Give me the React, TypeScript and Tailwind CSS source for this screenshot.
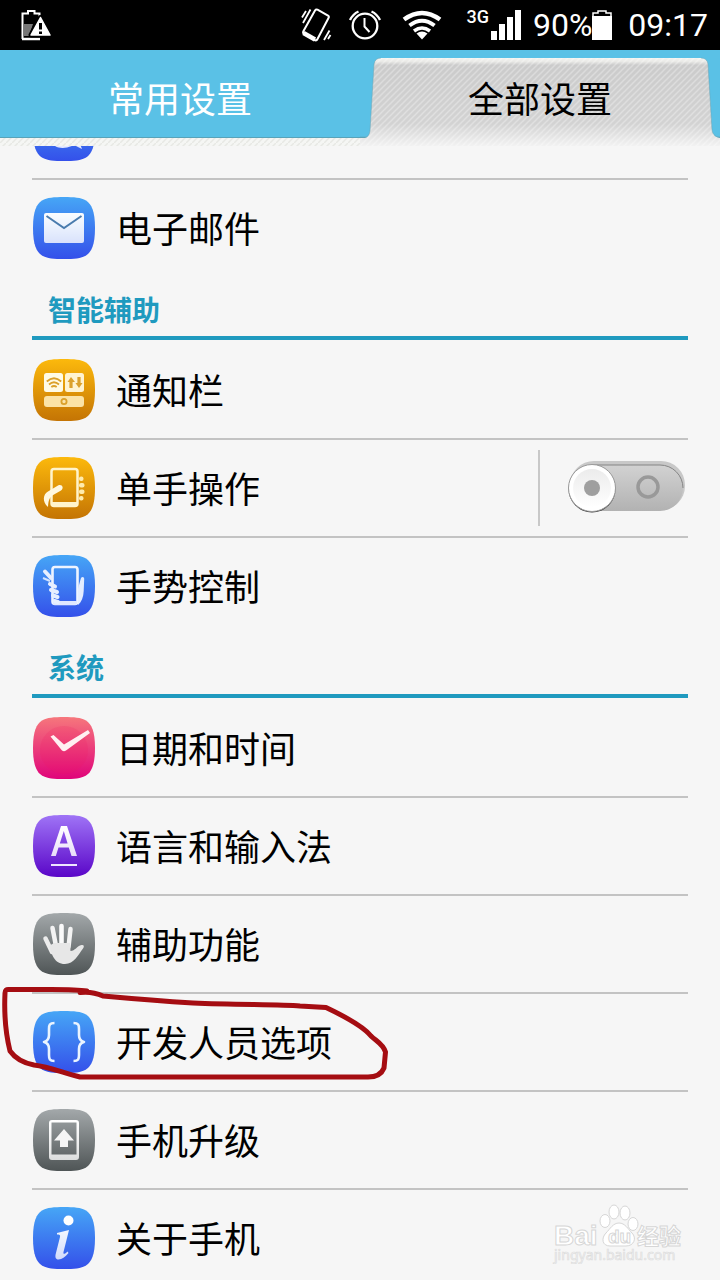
import React, { useState } from "react";

type Tone = "blue" | "amber" | "pink" | "purple" | "gray";

const tones: Record<Tone, [string, string]> = {
  blue: ["#46a6f6", "#3450ea"],
  amber: ["#fcb90c", "#c47404"],
  pink: ["#f6777c", "#e0047a"],
  purple: ["#9f74f6", "#5a06c8"],
  gray: ["#a3a8aa", "#4f5556"],
};

function Tile({ tone, id, children }: { tone: Tone; id: string; children: React.ReactNode }) {
  const [top, bottom] = tones[tone];
  return (
    <svg viewBox="0 0 64 64" className="size-16 shrink-0" aria-hidden="true">
      <defs>
        <linearGradient id={id} x1="0" y1="0" x2="0" y2="1">
          <stop offset="0" stopColor={top} />
          <stop offset="1" stopColor={bottom} />
        </linearGradient>
        <linearGradient id={id + "-ink"} gradientUnits="userSpaceOnUse" x1="0" y1="12" x2="0" y2="52">
          <stop offset="0" stopColor="#ffffff" />
          <stop offset="1" stopColor="#ffffff" stopOpacity="0.78" />
        </linearGradient>
      </defs>
      <path
        d="M32 1 C42 1 49 1.500 54 4.500 C59.500 8 63 15 63 32 C63 49 59.500 56 54 59.500 C49 62.500 42 63 32 63 C22 63 15 62.500 10 59.500 C4.500 56 1 49 1 32 C1 15 4.500 8 10 4.500 C15 1.500 22 1 32 1 Z"
        fill={`url(#${id})`}
      />
      {children}
    </svg>
  );
}

const MessageIcon = () => (
  <Tile tone="blue" id="message">
    <path d="M18 42 C22 51 32 52 42 47 L50 51 L47 43 Z" fill="#e4e9ff" />
  </Tile>
);

const MailIcon = () => (
  <Tile tone="blue" id="mail">
    <rect x="12" y="17" width="40" height="30" rx="2" fill="url(#mail-ink)" />
    <path d="M14.500 20 L32 32 L49.500 20" fill="none" stroke="#4a7cae" strokeWidth="2" />
  </Tile>
);

const PanelIcon = () => (
  <Tile tone="amber" id="panel">
    <rect x="12" y="15" width="19" height="19" rx="2.500" fill="#fffbe6" />
    <rect x="33" y="15" width="19" height="19" rx="2.500" fill="#fff3d0" />
    <rect x="12" y="38" width="40" height="11" rx="3" fill="#fbe3a6" />
    <g fill="none" stroke="#dba12c" strokeWidth="1.800">
      <path d="M14.800 23.500 Q22 17 29.200 23.500 M17 26.500 Q22 22 27 26.500 M19.300 29 Q22 27 24.700 29" />
      <circle cx="32" cy="43.500" r="2.600" />
    </g>
    <path d="M39 19 L43 24 H40.600 V30 H37.400 V24 H35.500 Z M47 30 L43.500 25 H45.400 V19 H48.600 V25 H50.500 Z" fill="#dba12c" />
  </Tile>
);

const OneHandIcon = () => (
  <Tile tone="amber" id="onehand">
    <rect x="19.500" y="13" width="26" height="37" rx="2.500" fill="none" stroke="#fff4cc" strokeWidth="2.500" />
    <path d="M20 48 H45" stroke="#fff4cc" strokeWidth="4" />
    <path d="M16 51 C10 46 11 38 16 35.500 L26 29.500 C30 27.500 32.500 32 29 34.500 L22 38.500 C17 41 16.500 45 16 51 Z" fill="#fff8e0" />
    <g fill="#ffebad">
      <rect x="47" y="20.500" width="4.500" height="4.500" rx="2" />
      <rect x="47" y="27" width="5.500" height="4.500" rx="2" />
      <rect x="47" y="33.500" width="5.500" height="4.500" rx="2" />
      <rect x="47" y="40" width="4.500" height="4.500" rx="2" />
    </g>
  </Tile>
);

const GestureIcon = () => (
  <Tile tone="blue" id="gesture">
    <rect x="20.500" y="13" width="25" height="37" rx="2.500" fill="none" stroke="#eef4ff" strokeWidth="2.600" />
    <path d="M21 49 H45" stroke="#dfe7ff" strokeWidth="4" />
    <path d="M46 51 V35 C47 31 48 27 49 24 C50 22 52.500 23 52.200 25 L51.700 37 C51.500 43 49.500 48 46 51 Z" fill="#e4edff" />
    <g fill="none" stroke="#e7efff" strokeWidth="4" strokeLinecap="round">
      <path d="M13 17.500 L19 24" />
      <path d="M18 30 L23 32.500" />
      <path d="M19 36 L25 38" />
      <path d="M21 41.500 L25.500 43" />
      <path d="M22.500 47 L26 48" />
    </g>
    <path d="M11 24 L18 27" stroke="#d2e3ff" strokeWidth="2" />
  </Tile>
);

const ClockIcon = () => (
  <Tile tone="pink" id="clock">
    <circle cx="32" cy="34" r="24" fill="#f0125f" opacity="0.15" />
    <path d="M18.500 20.500 L21.500 19 L32 28.500 L56 14 L58 17 L34 34.500 Q32 36 30 34.500 Z" fill="#fff0f2" />
  </Tile>
);

const LanguageIcon = () => (
  <Tile tone="purple" id="language">
    <path d="M29 12 H35 L45 42 H39.500 L36.800 33.500 H26.500 L23.800 42 H19 Z M31.800 17 L27.800 29.500 H35.600 Z" fill="url(#language-ink)" fillRule="evenodd" />
    <path d="M19 51 H45" stroke="#eee5ff" strokeWidth="2" />
  </Tile>
);

const HandIcon = () => (
  <Tile tone="gray" id="hand">
    <g fill="none" strokeLinecap="round">
      <path d="M13.500 26.500 L20 40" stroke="#ececec" strokeWidth="4.500" />
      <path d="M20.500 16 L24 34" stroke="#f3f3f3" strokeWidth="4.500" />
      <path d="M29.500 14 V34" stroke="#fafafa" strokeWidth="4.600" />
      <path d="M38.500 17 L36.500 35" stroke="#f3f3f3" strokeWidth="4.500" />
    </g>
    <path d="M17 34 L22 31 L38 31 L38.500 39 C43 39 45 34 49.500 33 C52 32.500 52.500 34.500 51 36.500 C46 43 42 52 33 52 C22 52 20 42 17 34 Z" fill="#e7e7e7" />
  </Tile>
);

const BracesIcon = () => (
  <Tile tone="blue" id="braces">
    <g fill="none" stroke="#eaf4ff" strokeWidth="2.600" strokeLinejoin="round">
      <path d="M22.500 13 C17.500 13 17 15 17 19 V25 C17 29 16 31 12 32 C16 33 17 35 17 39 V45 C17 49 17.500 51 22.500 51" />
      <path d="M41.500 13 C46.500 13 47 15 47 19 V25 C47 29 48 31 52 32 C48 33 47 35 47 39 V45 C47 49 46.500 51 41.500 51" />
    </g>
  </Tile>
);

const UpdateIcon = () => (
  <Tile tone="gray" id="update">
    <path d="M20 12 H44 Q47 12 47 15 V49 Q47 52 44 52 H20 Q17 52 17 49 V15 Q17 12 20 12 Z M19.500 14.500 V46.500 H44.500 V14.500 Z" fill="url(#update-ink)" fillRule="evenodd" />
    <path d="M32 21 L42 32.500 H36 V39 H28 V32.500 H22 Z" fill="#f5f5f5" />
  </Tile>
);

const InfoIcon = () => (
  <Tile tone="blue" id="info">
    <circle cx="36.500" cy="14.500" r="5" fill="#ffffff" />
    <path d="M25 27 C29 26 33 25 37 24 L31.500 46 C31 49 33 48 35.500 45.500 L36.500 47 C33 51 30 53.500 26.500 53.500 C23.500 53.500 23 51 23.700 48 L28 31 C28.500 29 27.500 28.500 25 28.500 Z" fill="url(#info-ink)" />
  </Tile>
);

interface Item {
  label: string;
  icon: React.ReactNode;
  toggle?: boolean;
  marked?: boolean;
}

interface Group {
  title?: string;
  items: Item[];
}

const groups: Group[] = [
  { items: [{ label: "电子邮件", icon: <MailIcon /> }] },
  {
    title: "智能辅助",
    items: [
      { label: "通知栏", icon: <PanelIcon /> },
      { label: "单手操作", icon: <OneHandIcon />, toggle: true },
      { label: "手势控制", icon: <GestureIcon /> },
    ],
  },
  {
    title: "系统",
    items: [
      { label: "日期和时间", icon: <ClockIcon /> },
      { label: "语言和输入法", icon: <LanguageIcon /> },
      { label: "辅助功能", icon: <HandIcon /> },
      { label: "开发人员选项", icon: <BracesIcon />, marked: true },
      { label: "手机升级", icon: <UpdateIcon /> },
      { label: "关于手机", icon: <InfoIcon /> },
    ],
  },
];

function StatusBar() {
  return (
    <div className="flex h-[50px] shrink-0 items-center justify-between bg-black pr-3 pl-5 font-[Roboto,'Noto_Sans',sans-serif] text-white">
      <svg viewBox="0 0 32 32" className="size-8" aria-hidden="true">
        <path d="M2.500 30 V4.500 H8 V2 H14.500 V4.500 H19.500 V9" fill="none" stroke="#fff" strokeWidth="2" />
        <path d="M3.500 15 H13 L9 27 H3.500 Z" fill="#777" />
        <path d="M2 30 H20" stroke="#fff" strokeWidth="2.500" />
        <path d="M20.500 8.500 L30 26 H11 Z" fill="#fff" stroke="#000" strokeWidth="5" strokeLinejoin="round" />
        <path d="M20.500 8.500 L30 26 H11 Z" fill="#fff" stroke="#fff" strokeWidth="1.500" strokeLinejoin="round" />
        <path d="M20.500 14 V20.500 M20.500 22.500 V25" stroke="#000" strokeWidth="3" />
      </svg>
      <div className="flex items-center">
        <svg viewBox="0 0 32 36" className="mr-4 h-9 w-8" aria-hidden="true">
          <g fill="none" stroke="#fff">
            <path d="M15 3.500 Q16 2 17.500 2.700 L28 8.500 Q29.500 9.500 28.500 11 L17.500 32 Q16.500 34 14.500 33 L4 27 Q2.500 26 3.500 24 Z" strokeWidth="2" />
            <path d="M3.500 26 L15 32.500" strokeWidth="4.500" />
            <path d="M2 10.500 L6 4 M3 16 L10.500 2.500" strokeWidth="1.800" />
            <path d="M29.500 23.500 L24 33 M30.500 28 L28 32" strokeWidth="1.800" />
          </g>
        </svg>
        <svg viewBox="0 0 34 34" className="mr-5 size-[34px]" aria-hidden="true">
          <g fill="none" stroke="#fff" strokeWidth="2.300">
            <circle cx="17" cy="18" r="12.300" />
            <path d="M16.500 10 V18.500 L21.500 24" strokeWidth="2" />
            <path d="M2 12 Q5 6 10.500 3.500 M32 12 Q29 6 23.500 3.500" />
          </g>
        </svg>
        <svg viewBox="0 0 40 30" className="mr-6 h-[30px] w-10" aria-hidden="true">
          <g fill="none" stroke="#fff" strokeWidth="4.500">
            <path d="M2 9.500 Q20 -3.500 38 9.500" />
            <path d="M7.500 15.500 Q20 6 32.500 15.500" strokeWidth="4" />
            <path d="M12 21 Q20 15 28 21" strokeWidth="3.500" />
          </g>
          <path d="M14.500 23.500 Q20 19.500 25.500 23.500 L20 29.500 Z" fill="#fff" />
        </svg>
        <span className="h-9 text-[18px] leading-5 font-medium">3G</span>
        <svg viewBox="0 0 30 30" className="mr-3 ml-[2px] size-[30px]" aria-hidden="true">
          <path d="M0 21 H6 V30 H0 Z M8 14 H14 V30 H8 Z M16 7 H22 V30 H16 Z M24 0 H30 V30 H24 Z" fill="#fff" />
        </svg>
        <span className="text-[32px] leading-10">90%</span>
        <svg viewBox="0 0 20 30" className="mr-4 h-[30px] w-5" aria-hidden="true">
          <path d="M0 6 H20 V30 H0 Z" fill="#fff" />
          <path d="M1 6 V3 H6 V1 H14 V3 H19 V6" fill="none" stroke="#fff" strokeWidth="1.500" />
        </svg>
        <time className="text-[32px] leading-10">09:17</time>
      </div>
    </div>
  );
}

function Tabs() {
  return (
    <div
      role="tablist"
      className="relative grid h-24 shrink-0 grid-cols-2 bg-[#5ac1e6] pb-[9px] text-[36px] leading-none"
    >
      <svg className="absolute inset-x-0 bottom-0 h-[9px] w-full" aria-hidden="true">
        <defs>
          <pattern id="strip-stripe" width="6" height="6" patternUnits="userSpaceOnUse">
            <rect width="6" height="6" fill="#f5f6f4" />
            <path d="M-1 7 L7 -1" stroke="#e7e8e4" strokeWidth="1.500" />
          </pattern>
        </defs>
        <rect width="100%" height="9" fill="url(#strip-stripe)" />
        <rect width="100%" height="1" fill="#58a3b9" />
      </svg>
      <button type="button" role="tab" aria-selected="false" className="relative pt-[6px] text-white">
        常用设置
      </button>
      <button type="button" role="tab" aria-selected="true" className="relative pt-[6px] text-black">
        <svg viewBox="0 0 360 96" preserveAspectRatio="none" className="absolute top-0 left-0 h-24 w-full" aria-hidden="true">
          <defs>
            <linearGradient id="tab-fill" x1="0" y1="0" x2="0" y2="1">
              <stop offset="0" stopColor="#f4f4f1" />
              <stop offset="0.040" stopColor="#e9e9e6" />
              <stop offset="0.080" stopColor="#cbcbcb" />
              <stop offset="0.750" stopColor="#d3d3d3" />
              <stop offset="1" stopColor="#f2f2f2" />
            </linearGradient>
            <pattern id="tab-stripe" width="6" height="6" patternUnits="userSpaceOnUse">
              <path d="M-1 7 L7 -1 M-4 4 L4 -4 M2 10 L10 2" stroke="#ffffff" strokeWidth="1.500" opacity="0.300" />
            </pattern>
          </defs>
          <path d="M0 88 H5 Q9 87 10 81 L14 14 Q15 8 21 8 H341 Q347 8 348 14 L352 80 Q353 87 360 88 V96 H0 Z" fill="url(#tab-fill)" />
          <path d="M0 88 H5 Q9 87 10 81 L14 14 Q15 8 21 8 H341 Q347 8 348 14 L352 80 Q353 87 360 88 V96 H0 Z" fill="url(#tab-stripe)" />
          <path d="M0 87 H5 Q9 87 10 81 L14 14 Q15 8 21 8 M341 8 Q347 8 348 14 L352 80 Q353 87 360 87" fill="none" stroke="#6aa3b4" strokeOpacity="0.500" />
        </svg>
        <span className="relative">全部设置</span>
      </button>
    </div>
  );
}

function Switch({ label }: { label: string }) {
  const [on, setOn] = useState(false);
  return (
    <label className="relative flex h-[76px] w-[150px] shrink-0 items-center justify-end border-l-2 border-[#c8c8c8]">
      <input
        type="checkbox"
        role="switch"
        aria-label={label}
        checked={on}
        onChange={(e) => setOn(e.target.checked)}
        className="absolute inset-0 size-full cursor-pointer appearance-none"
      />
      <svg viewBox="0 0 122 56" className="pointer-events-none h-14 w-[122px]" aria-hidden="true">
        <defs>
          <linearGradient id="track" x1="0" y1="0" x2="0" y2="1">
            <stop offset="0" stopColor="#d2d2d2" />
            <stop offset="1" stopColor="#b2b2b2" />
          </linearGradient>
          <linearGradient id="knob" x1="0" y1="0" x2="0" y2="1">
            <stop offset="0" stopColor="#ececec" />
            <stop offset="1" stopColor="#ffffff" />
          </linearGradient>
        </defs>
        <rect x="4" y="1" width="115" height="49" rx="24" fill="#c8c8c8" />
        <rect x="3" y="5" width="114" height="46" rx="23" fill="url(#track)" />
        <path d="M26 5 H94 A23 23 0 0 1 117 28" fill="none" stroke="#858585" />
        <circle cx="82" cy="27" r="10" fill="none" stroke="#999999" strokeWidth="3.500" />
        <g transform={on ? "translate(67 0)" : undefined}>
          <circle cx="26" cy="29" r="23.500" fill="#333333" />
          <circle cx="26" cy="28" r="23.500" fill="#ffffff" stroke="#9a9a9a" />
          <circle cx="26" cy="28" r="19" fill="url(#knob)" />
          <circle cx="26" cy="28" r="8" fill="#9f9f9f" />
        </g>
      </svg>
    </label>
  );
}

function Annotation() {
  return (
    <svg viewBox="0 980 400 110" className="pointer-events-none absolute -top-[14px] -left-8 z-10 h-[110px] w-[400px]" aria-hidden="true">
      <path
        d="M80 992 L87 991 C75 989 50 989.500 40 989.500 L9 989.500 Q5 989 5 993 C4 1014 6 1035 10 1051 C15 1058 23 1063 34 1065 C50 1067 63 1073 80 1077 H368 C377 1077 382 1073 384 1068 L385.500 1052 C383 1044 376 1041 371 1036 C363 1026 346 1017 326 1007.500 L300 1006 C280 1004 240 1005 193 1003 C160 1001 125 998 103 996 Q92 991 80 992.500"
        fill="none"
        stroke="#a50d12"
        strokeWidth="5"
        strokeLinecap="round"
        strokeLinejoin="round"
      />
    </svg>
  );
}

function Row({ item, last }: { item: Item; last: boolean }) {
  return (
    <li className={last ? "relative flex h-24 items-center" : "relative flex h-[98px] items-center border-b-2 border-[#c3c3c3]"}>
      <button type="button" className="flex h-full flex-1 items-center gap-5 text-left">
        {item.icon}
        <span className="pb-[2px] text-[36px] leading-none text-black">{item.label}</span>
      </button>
      {item.toggle && <Switch label={item.label} />}
      {item.marked && <Annotation />}
    </li>
  );
}

function Watermark() {
  return (
    <div className="pointer-events-none absolute right-9 bottom-4 flex w-[132px] flex-col">
      <svg viewBox="0 0 132 44" className="h-11 w-[132px]" aria-hidden="true">
        <g fill="#ffffff" stroke="#d6d6d6" strokeWidth="1">
          <ellipse cx="53" cy="17" rx="5" ry="6.500" />
          <ellipse cx="62" cy="8" rx="5" ry="7" />
          <ellipse cx="73" cy="9" rx="5" ry="7" />
          <ellipse cx="81" cy="20" rx="5" ry="6.500" />
          <path d="M67 19 C73 19 76 25 80 29 C85 34 82 42 74 42 H58 C50 42 49 34 54 29 C58 25 61 19 67 19 Z" />
          <g className="font-['Liberation_Sans','Noto_Sans_CJK_SC',sans-serif] font-bold">
            <text x="2" y="41" fontSize="28">Bai</text>
            <text x="56" y="39" fontSize="19">du</text>
            <text x="85" y="40" fontSize="22">经验</text>
          </g>
        </g>
      </svg>
      <svg viewBox="0 0 132 16" className="h-4 w-[132px]" aria-hidden="true">
        <text x="2" y="12" fontSize="14" fill="#fafafa" stroke="#dcdcdc" strokeWidth="0.700" className="font-['Noto_Sans',sans-serif]">
          jingyan.baidu.com
        </text>
      </svg>
    </div>
  );
}

export default function App() {
  return (
    <div className="relative flex h-screen flex-col overflow-hidden bg-[#f6f6f6] font-['Noto_Sans_CJK_SC',sans-serif]">
      <StatusBar />
      <Tabs />
      <main className="min-h-0 flex-1 overflow-y-auto px-8 [scrollbar-width:none]">
        <div className="flex h-[34px] items-end border-b-2 border-[#c3c3c3]">
          <div className="flex h-8 items-end overflow-hidden pb-4">
            <MessageIcon />
          </div>
        </div>
        {groups.map((group, g) => (
          <section key={g}>
            {group.title && (
              <div className="pb-[2px]">
                <h2 className="flex h-16 items-center border-b-4 border-[#1f9abf] px-4 pt-[6px] text-[28px] leading-none font-bold text-[#1f9abf]">
                  {group.title}
                </h2>
              </div>
            )}
            <ul>
              {group.items.map((item, i) => (
                <Row key={item.label} item={item} last={i === group.items.length - 1} />
              ))}
            </ul>
          </section>
        ))}
      </main>
      <Watermark />
    </div>
  );
}
